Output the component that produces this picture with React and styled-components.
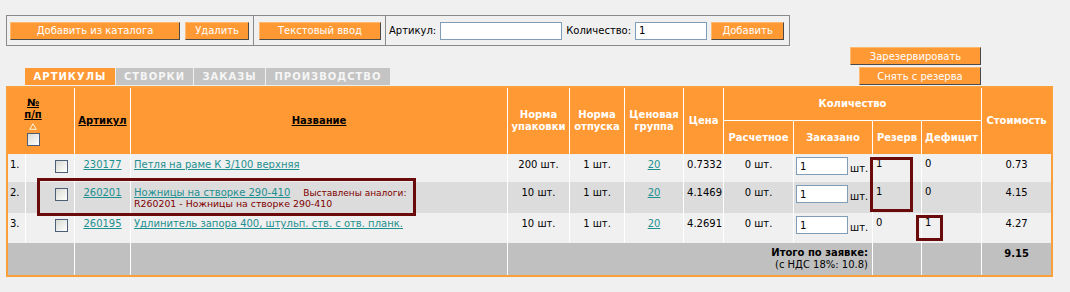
import React from 'react';
import styled, { createGlobalStyle } from 'styled-components';

const Global = createGlobalStyle`
  html, body { margin: 0; padding: 0; background: #f0f0f0; }
  body { font-family: "DejaVu Sans", Verdana, sans-serif; font-size: 10px; color: #000; }
`;

const Page = styled.div`
  padding: 15px 0 0 6px;
  width: 1047px;
`;

const Toolbar = styled.div`
  display: flex;
  width: 784px;
  height: 31px;
  box-sizing: border-box;
  border: 1px solid #8a8a8a;
`;

const ToolCell = styled.div`
  display: flex;
  align-items: center;
  gap: ${p => p.$gap}px;
  padding: 0 ${p => p.$pr}px 0 ${p => p.$pl}px;
  & + & { border-left: 1px solid #8a8a8a; }
`;

const Btn = styled.button`
  box-sizing: border-box;
  height: 18px;
  width: ${p => p.$w}px;
  padding: 0;
  margin: 0;
  background: #ff9933;
  color: #fff;
  font: 10px "DejaVu Sans", Verdana, sans-serif;
  border: 1px solid;
  border-color: #ffb870 #4a4a4a #4a4a4a #ffb870;
  cursor: pointer;
`;

const Label = styled.span`
  white-space: nowrap;
`;

const TextInput = styled.input`
  box-sizing: border-box;
  width: ${p => p.$w}px;
  height: 18px;
  margin: 0;
  padding: 0 3px;
  border: 1px solid #7f9db9;
  background: #fff;
  font: 10px "DejaVu Sans", Verdana, sans-serif;
  color: #000;
`;

const MidRow = styled.div`
  display: flex;
  justify-content: space-between;
  align-items: flex-end;
  padding: 1px 72px 1px 19px;
`;

const Tabs = styled.div`
  display: flex;
  gap: 1px;
`;

const Tab = styled.div`
  width: ${p => p.$w}px;
  height: 17px;
  line-height: 17px;
  text-align: center;
  background: ${p => (p.$active ? '#ff9933' : '#c4c4c4')};
  color: ${p => (p.$active ? '#fff' : '#f6f6f6')};
  font-weight: bold;
  letter-spacing: 1px;
  font-size: 10px;
`;

const ReserveStack = styled.div`
  display: flex;
  flex-direction: column;
  align-items: flex-end;
  gap: 2px;
`;

const TableArea = styled.div`
  position: relative;
`;

const TableFrame = styled.div`
  border: 2px solid #fa9f3a;
  width: 1043px;
`;

const Table = styled.table`
  width: 1043px;
  table-layout: fixed;
  border-collapse: separate;
  border-spacing: 0;
  font-size: 10px;
`;

const Col = styled.col`
  width: ${p => p.$w}px;
`;

const HeadRow = styled.tr`
  height: ${p => p.$h}px;
`;

const Th = styled.th`
  background: #ff9933;
  color: #fff;
  font-weight: bold;
  font-size: 10px;
  text-align: center;
  vertical-align: middle;
  padding: ${p => (p.$pr ? `0 ${p.$pr}px 0 0` : '0 1px')};
  border-left: ${p => (p.$first ? 'none' : '1px solid #fff')};
  border-bottom: ${p => (p.$bottom ? '1px solid #fff' : 'none')};
  line-height: 12px;
`;

const SortLink = styled.a`
  color: #000;
  text-decoration: underline;
  font-weight: bold;
  display: ${p => (p.$block ? 'block' : 'inline')};
`;

const SortArrow = styled.svg`
  display: block;
  margin: 2px auto 3px;
`;

const Check = styled.span`
  display: block;
  width: 13px;
  height: 13px;
  box-sizing: border-box;
  border: 1px solid #4d5f78;
  background: linear-gradient(135deg, #d9d9d3 0%, #f4f4f2 70%, #fff 100%);
  margin: ${p => (p.$center ? '0 auto' : '1px 0 0 auto')};
`;

const Row = styled.tr`
  height: ${p => p.$h}px;
  background: ${p => p.$bg};
`;

const Td = styled.td`
  vertical-align: top;
  padding: ${p => p.$pad || '5px 3px 0'};
  text-align: ${p => p.$align || 'center'};
  border-left: ${p => (p.$first ? 'none' : '1px solid #fff')};
  white-space: nowrap;
  overflow: hidden;
`;

const Link = styled.a`
  color: #1d8f8f;
  text-decoration: underline;
`;

const AnalogNote = styled.span`
  color: #800000;
  font-size: 9px;
  margin-left: 13px;
`;

const AnalogLine = styled.div`
  color: #800000;
  font-size: 9.4px;
  line-height: 12px;
`;

const QtyBox = styled.div`
  display: flex;
  align-items: flex-end;
  gap: 2px;
`;

const Unit = styled.span`
  line-height: 10px;
  margin-bottom: 1px;
`;

const TotalLabel = styled.div`
  font-weight: bold;
  line-height: 12px;
`;

const TotalNote = styled.div`
  line-height: 12px;
`;

const Strong = styled.b`
  font-weight: bold;
`;

const Highlight = styled.div`
  position: absolute;
  left: ${p => p.$x}px;
  top: ${p => p.$y}px;
  width: ${p => p.$w}px;
  height: ${p => p.$h}px;
  box-sizing: border-box;
  border: 3px solid #6b0a0a;
  pointer-events: none;
`;

const rows = [
  { n: '1.', art: '230177', name: 'Петля на раме К 3/100 верхняя', pack: '200 шт.', rel: '1 шт.', grp: '20', price: '0.7332', calc: '0 шт.', res: '1', def: '0', cost: '0.73', h: 28, bg: '#f0f0f0' },
  { n: '2.', art: '260201', name: 'Ножницы на створке 290-410', analog: true, pack: '10 шт.', rel: '1 шт.', grp: '20', price: '4.1469', calc: '0 шт.', res: '1', def: '0', cost: '4.15', h: 31, bg: '#dcdcdc' },
  { n: '3.', art: '260195', name: 'Удлинитель запора 400, штульп. ств. с отв. планк.', pack: '10 шт.', rel: '1 шт.', grp: '20', price: '4.2691', calc: '0 шт.', res: '0', def: '1', cost: '4.27', h: 30, bg: '#f0f0f0' },
];

const colWidths = [17, 49, 56, 377, 62, 55, 59, 40, 70, 79, 49, 60, 70];

export default function App() {
  return (
    <>
      <Global />
      <Page>
        <Toolbar>
          <ToolCell $gap={5} $pl={3} $pr={4}>
            <Btn $w={170}>Добавить из каталога</Btn>
            <Btn $w={64}>Удалить</Btn>
          </ToolCell>
          <ToolCell $gap={0} $pl={5} $pr={4}>
            <Btn $w={122}>Текстовый ввод</Btn>
          </ToolCell>
          <ToolCell $gap={4} $pl={3} $pr={6}>
            <Label>Артикул:</Label>
            <TextInput $w={122} defaultValue="" />
            <Label>Количество:</Label>
            <TextInput $w={72} defaultValue="1" />
            <Btn $w={73}>Добавить</Btn>
          </ToolCell>
        </Toolbar>

        <MidRow>
          <Tabs>
            <Tab $active $w={90}>АРТИКУЛЫ</Tab>
            <Tab $w={77}>СТВОРКИ</Tab>
            <Tab $w={71}>ЗАКАЗЫ</Tab>
            <Tab $w={124}>ПРОИЗВОДСТВО</Tab>
          </Tabs>
          <ReserveStack>
            <Btn $w={131}>Зарезервировать</Btn>
            <Btn $w={122}>Снять с резерва</Btn>
          </ReserveStack>
        </MidRow>

        <TableArea>
          <TableFrame>
            <Table>
              <colgroup>
                {colWidths.map((w, i) => <Col key={i} $w={w} />)}
              </colgroup>
              <thead>
                <HeadRow $h={33}>
                  <Th $first colSpan={2} rowSpan={2} $pr={16}>
                    <SortLink $block>№</SortLink>
                    <SortLink $block>п/п</SortLink>
                    <SortArrow width="8" height="7" viewBox="0 0 8 7">
                      <polygon points="4,0.8 7.3,6.3 0.7,6.3" fill="none" stroke="#fbf6e0" strokeWidth="1" />
                    </SortArrow>
                    <Check $center />
                  </Th>
                  <Th rowSpan={2}><SortLink>Артикул</SortLink></Th>
                  <Th rowSpan={2}><SortLink>Название</SortLink></Th>
                  <Th rowSpan={2}>Норма<br />упаковки</Th>
                  <Th rowSpan={2}>Норма<br />отпуска</Th>
                  <Th rowSpan={2}>Ценовая<br />группа</Th>
                  <Th rowSpan={2}>Цена</Th>
                  <Th colSpan={4} $bottom>Количество</Th>
                  <Th rowSpan={2}>Стоимость</Th>
                </HeadRow>
                <HeadRow $h={33}>
                  <Th>Расчетное</Th>
                  <Th>Заказано</Th>
                  <Th>Резерв</Th>
                  <Th>Дефицит</Th>
                </HeadRow>
              </thead>
              <tbody>
                {rows.map(r => (
                  <Row key={r.n} $h={r.h} $bg={r.bg}>
                    <Td $first $align="left" $pad="5px 0 0 2px">{r.n}</Td>
                    <Td $align="right" $pad="5px 6px 0 0"><Check /></Td>
                    <Td><Link>{r.art}</Link></Td>
                    <Td $align="left" $pad="5px 3px 0 3px">
                      <Link>{r.name}</Link>
                      {r.analog && <AnalogNote>Выставлены аналоги:</AnalogNote>}
                      {r.analog && <AnalogLine>R260201 - Ножницы на створке 290-410</AnalogLine>}
                    </Td>
                    <Td>{r.pack}</Td>
                    <Td>{r.rel}</Td>
                    <Td><Link>{r.grp}</Link></Td>
                    <Td>{r.price}</Td>
                    <Td>{r.calc}</Td>
                    <Td $align="left" $pad="3px 2px 0 2px">
                      <QtyBox>
                        <TextInput $w={52} defaultValue="1" />
                        <Unit>шт.</Unit>
                      </QtyBox>
                    </Td>
                    <Td $align="left" $pad="4px 3px 0 3px">{r.res}</Td>
                    <Td $align="left" $pad="4px 3px 0 3px">{r.def}</Td>
                    <Td>{r.cost}</Td>
                  </Row>
                ))}
                <Row $h={32} $bg="#c0c0c0">
                  <Td $first colSpan={2} />
                  <Td />
                  <Td />
                  <Td colSpan={6} $align="right" $pad="4px 4px 0 0">
                    <TotalLabel>Итого по заявке:</TotalLabel>
                    <TotalNote>(с НДС 18%: 10.8)</TotalNote>
                  </Td>
                  <Td />
                  <Td />
                  <Td $pad="5px 3px 0"><Strong>9.15</Strong></Td>
                </Row>
              </tbody>
            </Table>
          </TableFrame>
          <Highlight $x={31} $y={92} $w={379} $h={38} />
          <Highlight $x={864} $y={71} $w={43} $h={55} />
          <Highlight $x={910} $y={129} $w={27} $h={26} />
        </TableArea>
      </Page>
    </>
  );
}
